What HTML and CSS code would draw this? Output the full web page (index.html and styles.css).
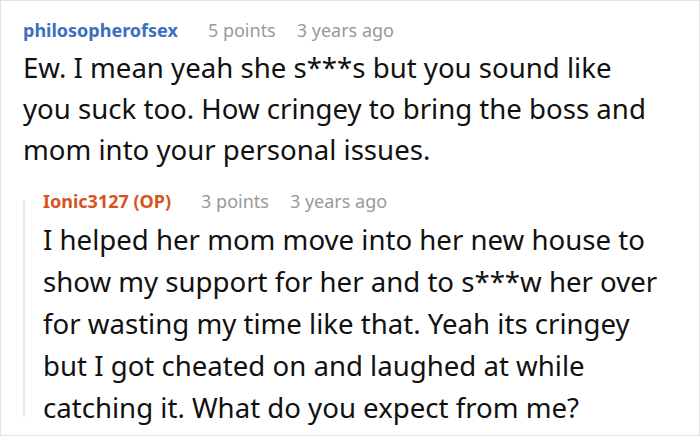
FILE: index.html
```html
<!DOCTYPE html>
<html lang="en">
<head>
<meta charset="utf-8">
<title>Comments</title>
<link rel="stylesheet" href="styles.css">
</head>
<body>
<div class="thread">
  <div class="comment">
    <div class="meta">
      <span class="author">philosopherofsex</span>
      <span class="points">5 points</span>
      <span class="time">3 years ago</span>
    </div>
    <p class="text">Ew. I mean yeah she s***s but you sound like you suck too. How cringey to bring the boss and mom into your personal issues.</p>
  </div>
  <div class="reply">
    <div class="meta">
      <span class="author op">Ionic3127 (OP)</span>
      <span class="points">3 points</span>
      <span class="time">3 years ago</span>
    </div>
    <p class="text">I helped her mom move into her new house to show my support for her and to s***w her over for wasting my time like that. Yeah its cringey but I got cheated on and laughed at while catching it. What do you expect from me?</p>
  </div>
</div>
</body>
</html>
```
FILE: styles.css
```css
html, body {
  margin: 0;
  padding: 0;
  background: #ffffff;
}
.thread {
  box-sizing: border-box;
  width: 700px;
  height: 436px;
  border: 1px solid #e2e2e2;
  padding: 17px 34px 0 22px;
  font-family: "Noto Sans", "Open Sans", sans-serif;
  color: #111111;
  overflow: hidden;
}
.meta {
  display: flex;
  align-items: baseline;
  font-size: 18px;
  line-height: 24px;
  margin-bottom: 5px;
  white-space: nowrap;
}
.author {
  font-weight: 700;
  color: #3b6fc0;
}
.author.op {
  color: #d9531e;
}
.points {
  color: #999999;
  margin-left: 30px;
}
.time {
  color: #999999;
  margin-left: 21px;
}
.text {
  margin: 0;
  font-size: 27.6px;
  line-height: 41px;
}
.comment .text {
  padding-right: 10px;
}
.reply {
  position: relative;
  margin-top: 19px;
  padding-left: 20px;
}
.reply .text {
  line-height: 42px;
}
.reply::before {
  content: "";
  position: absolute;
  left: 0;
  top: 11px;
  bottom: 11px;
  width: 2px;
  background: #e8e8e8;
}
```
